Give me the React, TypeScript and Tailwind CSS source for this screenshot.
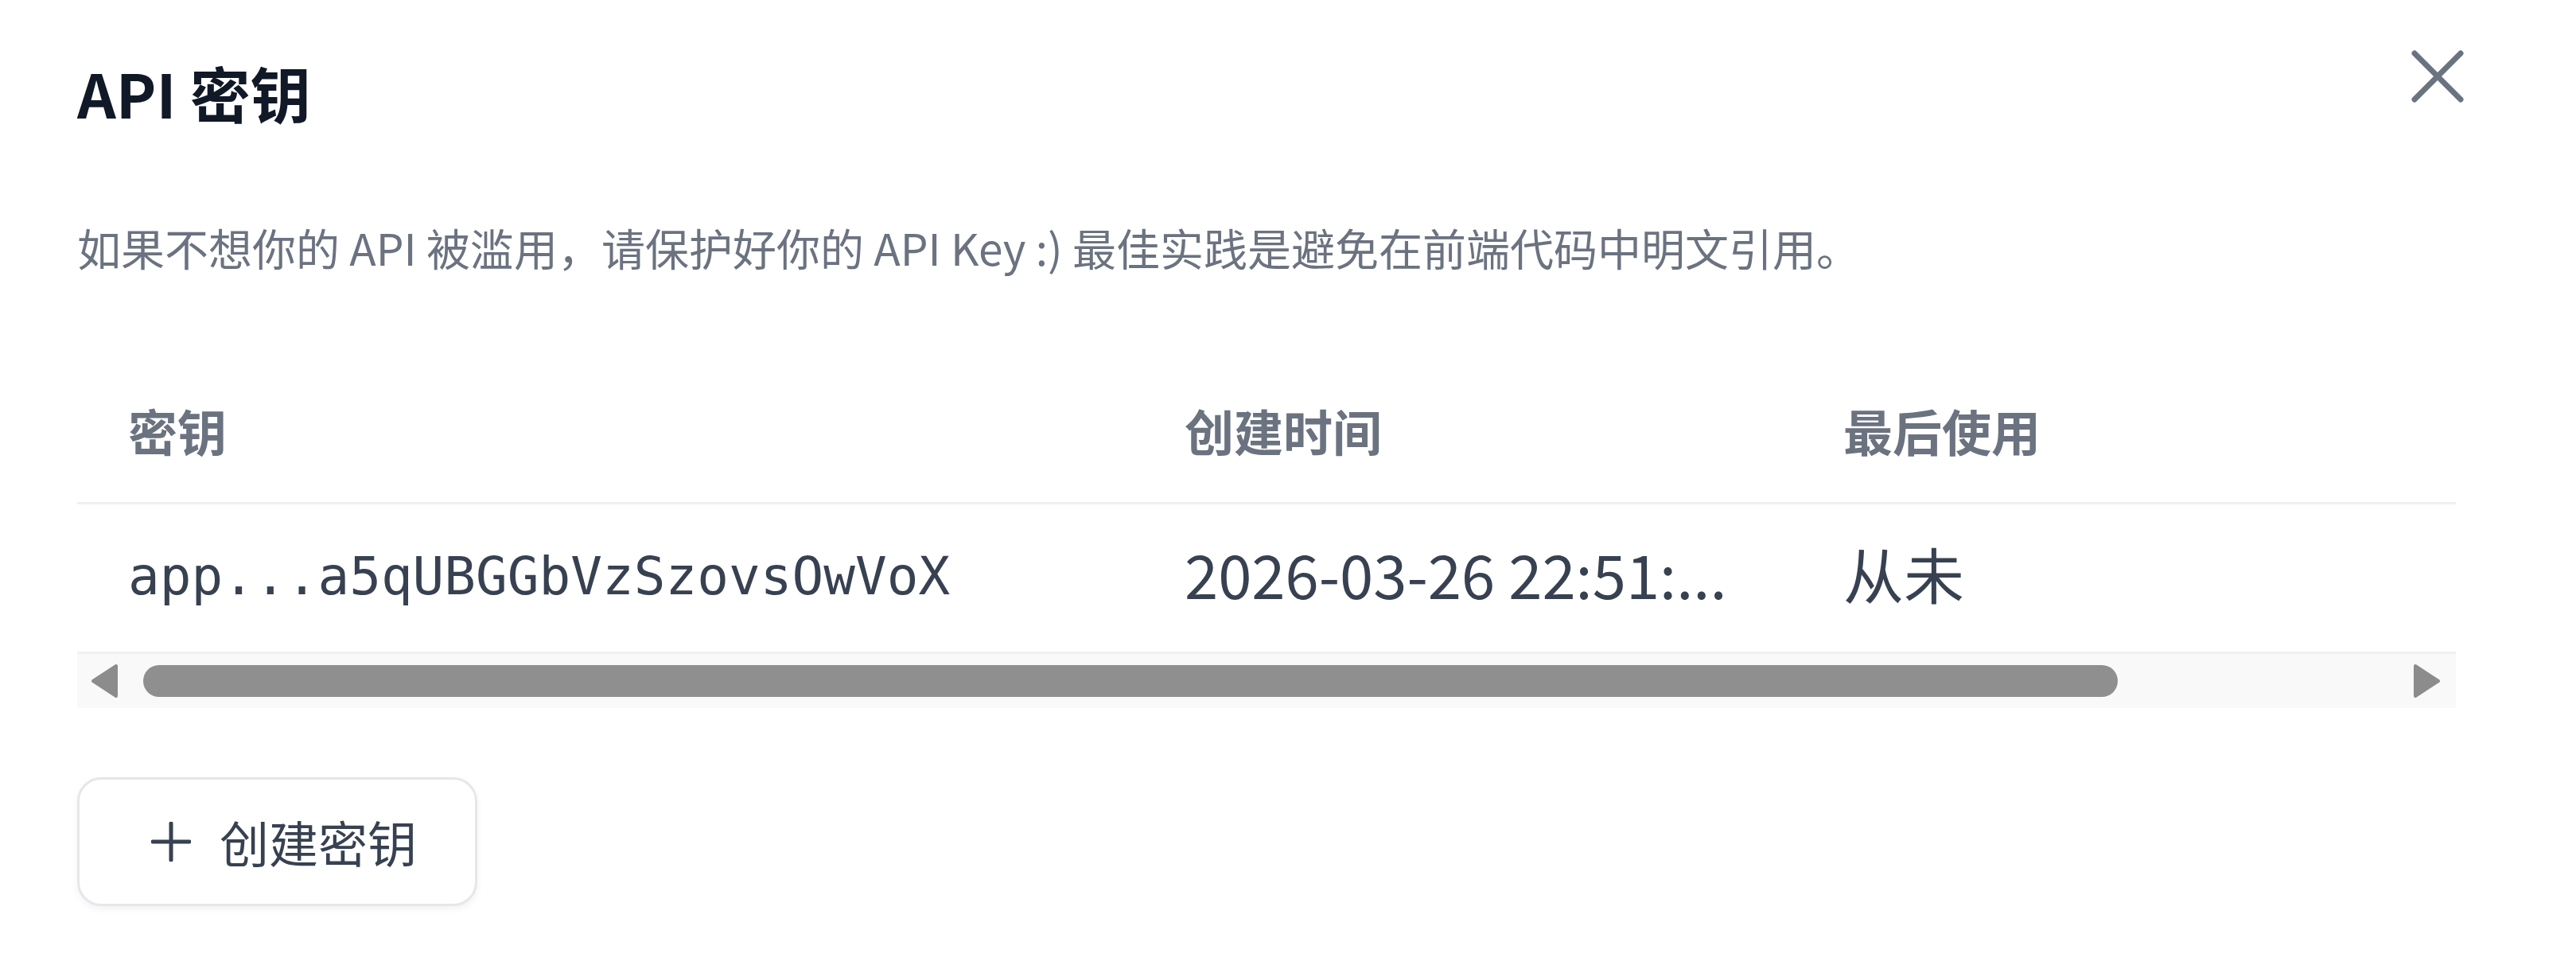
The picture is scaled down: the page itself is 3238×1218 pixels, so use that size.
import React from "react";

function CloseIcon() {
  return (
    <svg width="66" height="66" viewBox="0 0 66 66" fill="none">
      <path d="M4 4 L62 62 M62 4 L4 62" stroke="#6b7280" strokeWidth="7" strokeLinecap="round" />
    </svg>
  );
}

function PlusIcon() {
  return (
    <svg width="50" height="50" viewBox="0 0 50 50" fill="none">
      <path d="M25 2 V48 M2 25 H48" stroke="#374151" strokeWidth="5" strokeLinecap="round" />
    </svg>
  );
}

function ArrowLeft() {
  return (
    <svg width="35" height="44" viewBox="0 0 35 44">
      <path d="M32 3 L32 41 L3 22 Z" fill="#8c8c8c" stroke="#8c8c8c" strokeWidth="4" strokeLinejoin="round" />
    </svg>
  );
}

function ArrowRight() {
  return (
    <svg width="35" height="44" viewBox="0 0 35 44">
      <path d="M3 3 L3 41 L32 22 Z" fill="#8c8c8c" stroke="#8c8c8c" strokeWidth="4" strokeLinejoin="round" />
    </svg>
  );
}

export default function App() {
  return (
    <div className="w-[3238px] h-[1218px] overflow-hidden bg-white pl-[97px] pr-[141px] font-['Noto_Sans_CJK_SC','Noto_Sans',sans-serif]">
      {/* dialog header */}
      <div className="flex items-start justify-between pt-[63px]">
        <h2 className="mt-[15px] text-[76px] leading-[76px] font-bold text-[#111827]">API 密钥</h2>
        <button className="w-[66px] h-[66px] flex items-center justify-center">
          <CloseIcon />
        </button>
      </div>

      <p className="mt-[129px] text-[55px] leading-[55px] text-[#6b7280] whitespace-nowrap">
        如果不想你的 API 被滥用，请保护好你的 API Key :) 最佳实践是避免在前端代码中明文引用。
      </p>

      {/* keys table */}
      <div className="mt-[112px] mr-[10px] overflow-hidden">
        <div className="grid grid-cols-[1328px_828px_1fr] h-[184px] items-center border-b-[3px] border-[#f0f0f0] text-[62px] leading-none font-bold text-[#6b7280]">
          <div className="pl-[64px]">密钥</div>
          <div className="pl-[64px]">创建时间</div>
          <div className="pl-[64px]">最后使用</div>
        </div>
        <div className="grid grid-cols-[1328px_828px_1fr] h-[188px] items-center border-b-[3px] border-[#f0f0f0] text-[#374151]">
          <div className="pl-[64px] pb-[4px] font-['DejaVu_Sans_Mono',monospace] text-[66px] leading-none whitespace-nowrap">
            app...a5qUBGGbVzSzovsOwVoX
          </div>
          <div className="pl-[64px] pb-[13px] text-[76px] leading-none whitespace-nowrap">2026-03-26 22:51:...</div>
          <div className="pl-[64px] pb-[13px] text-[76px] leading-none">从未</div>
        </div>
        {/* horizontal scrollbar */}
        <div className="flex h-[68px] items-center bg-[#f9f9f9] pl-[17px] pr-[19px]">
          <ArrowLeft />
          <div className="ml-[31px] h-[40px] w-[2482px] rounded-full bg-[#8f8f8f]" />
          <div className="flex-1" />
          <ArrowRight />
        </div>
      </div>

      <button className="mt-[87px] flex h-[162px] w-[503px] items-center gap-[36px] rounded-[30px] border-[3px] border-[#e5e7eb] bg-white pl-[90px] shadow-[0_4px_10px_rgba(0,0,0,0.05)]">
        <PlusIcon />
        <span className="text-[62px] leading-none text-[#374151]">创建密钥</span>
      </button>
    </div>
  );
}
